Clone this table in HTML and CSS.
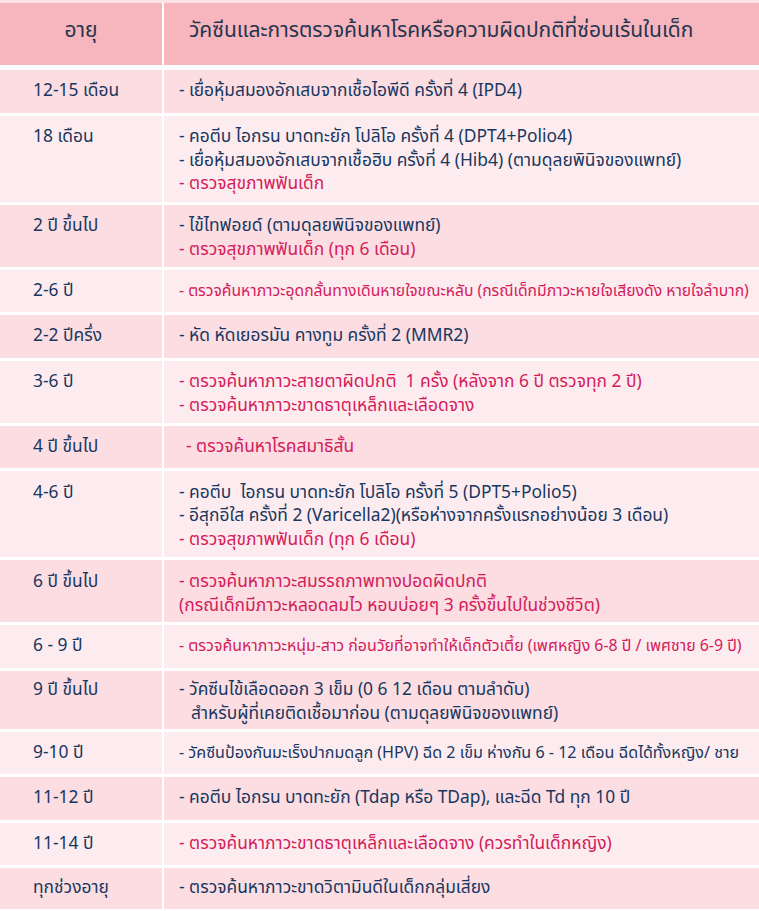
FILE: index.html
```html
<!DOCTYPE html>
<html lang="th">
<head>
<meta charset="utf-8">
<title>วัคซีนและการตรวจค้นหาโรค</title>
<link rel="stylesheet" href="styles.css">
</head>
<body>
<div class="table">
  <div class="row head">
    <div class="cell age">อายุ</div>
    <div class="cell info">วัคซีนและการตรวจค้นหาโรคหรือความผิดปกติที่ซ่อนเร้นในเด็ก</div>
  </div>
  <div class="row dark one">
    <div class="cell age">12-15 เดือน</div>
    <div class="cell info"><p>- เยื่อหุ้มสมองอักเสบจากเชื้อไอพีดี ครั้งที่ 4 (IPD4)</p></div>
  </div>
  <div class="row light three">
    <div class="cell age">18 เดือน</div>
    <div class="cell info">
      <p>- คอตีบ ไอกรน บาดทะยัก โปลิโอ ครั้งที่ 4 (DPT4+Polio4)</p>
      <p>- เยื่อหุ้มสมองอักเสบจากเชื้อฮิบ ครั้งที่ 4 (Hib4) (ตามดุลยพินิจของแพทย์)</p>
      <p class="red">- ตรวจสุขภาพฟันเด็ก</p>
    </div>
  </div>
  <div class="row dark two">
    <div class="cell age">2 ปี ขึ้นไป</div>
    <div class="cell info">
      <p>- ไข้ไทฟอยด์ (ตามดุลยพินิจของแพทย์)</p>
      <p class="red">- ตรวจสุขภาพฟันเด็ก (ทุก 6 เดือน)</p>
    </div>
  </div>
  <div class="row light one">
    <div class="cell age">2-6 ปี</div>
    <div class="cell info"><p class="red fit-a">- ตรวจค้นหาภาวะอุดกลั้นทางเดินหายใจขณะหลับ (กรณีเด็กมีภาวะหายใจเสียงดัง หายใจลำบาก)</p></div>
  </div>
  <div class="row dark one">
    <div class="cell age">2-2 ปีครึ่ง</div>
    <div class="cell info"><p>- หัด หัดเยอรมัน คางทูม ครั้งที่ 2 (MMR2)</p></div>
  </div>
  <div class="row light two">
    <div class="cell age">3-6 ปี</div>
    <div class="cell info">
      <p class="red">- ตรวจค้นหาภาวะสายตาผิดปกติ&nbsp; 1 ครั้ง (หลังจาก 6 ปี ตรวจทุก 2 ปี)</p>
      <p class="red">- ตรวจค้นหาภาวะขาดธาตุเหล็กและเลือดจาง</p>
    </div>
  </div>
  <div class="row dark one">
    <div class="cell age">4 ปี ขึ้นไป</div>
    <div class="cell info"><p class="red shift">- ตรวจค้นหาโรคสมาธิสั้น</p></div>
  </div>
  <div class="row light three">
    <div class="cell age">4-6 ปี</div>
    <div class="cell info">
      <p>- คอตีบ&nbsp; ไอกรน บาดทะยัก โปลิโอ ครั้งที่ 5 (DPT5+Polio5)</p>
      <p>- อีสุกอีใส ครั้งที่ 2 (Varicella2)(หรือห่างจากครั้งแรกอย่างน้อย 3 เดือน)</p>
      <p class="red">- ตรวจสุขภาพฟันเด็ก (ทุก 6 เดือน)</p>
    </div>
  </div>
  <div class="row dark two">
    <div class="cell age">6 ปี ขึ้นไป</div>
    <div class="cell info">
      <p class="red">- ตรวจค้นหาภาวะสมรรถภาพทางปอดผิดปกติ</p>
      <p class="red">(กรณีเด็กมีภาวะหลอดลมไว หอบบ่อยๆ 3 ครั้งขึ้นไปในช่วงชีวิต)</p>
    </div>
  </div>
  <div class="row light one">
    <div class="cell age">6 - 9 ปี</div>
    <div class="cell info"><p class="red fit-b">- ตรวจค้นหาภาวะหนุ่ม-สาว ก่อนวัยที่อาจทำให้เด็กตัวเตี้ย (เพศหญิง 6-8 ปี / เพศชาย 6-9 ปี)</p></div>
  </div>
  <div class="row dark tight">
    <div class="cell age">9 ปี ขึ้นไป</div>
    <div class="cell info">
      <p>- วัคซีนไข้เลือดออก 3 เข็ม (0 6 12 เดือน ตามลำดับ)</p>
      <p class="indent">สำหรับผู้ที่เคยติดเชื้อมาก่อน (ตามดุลยพินิจของแพทย์)</p>
    </div>
  </div>
  <div class="row light one">
    <div class="cell age">9-10 ปี</div>
    <div class="cell info"><p class="fit-c">- วัคซีนป้องกันมะเร็งปากมดลูก (HPV) ฉีด 2 เข็ม ห่างกัน 6 - 12 เดือน ฉีดได้ทั้งหญิง/ ชาย</p></div>
  </div>
  <div class="row dark one">
    <div class="cell age">11-12 ปี</div>
    <div class="cell info"><p>- คอตีบ ไอกรน บาดทะยัก (Tdap หรือ TDap), และฉีด Td ทุก 10 ปี</p></div>
  </div>
  <div class="row light one">
    <div class="cell age">11-14 ปี</div>
    <div class="cell info"><p class="red">- ตรวจค้นหาภาวะขาดธาตุเหล็กและเลือดจาง (ควรทำในเด็กหญิง)</p></div>
  </div>
  <div class="row dark one last">
    <div class="cell age">ทุกช่วงอายุ</div>
    <div class="cell info"><p>- ตรวจค้นหาภาวะขาดวิตามินดีในเด็กกลุ่มเสี่ยง</p></div>
  </div>
</div>
</body>
</html>
```
FILE: styles.css
```css
html, body {
  margin: 0;
  padding: 0;
  background: #ffffff;
}
body {
  font-family: "Noto Sans Thai", "Noto Sans", "DejaVu Sans", sans-serif;
  color: #183760;
  width: 759px;
  overflow: hidden;
}
.table {
  display: flex;
  flex-direction: column;
  gap: 3px;
}
.row {
  display: grid;
  grid-template-columns: 162px 1fr;
  column-gap: 2px;
}
.cell {
  font-size: 17.4px;
  line-height: 22.5px;
  box-sizing: border-box;
  padding-top: 10px;
}
.one .cell { height: 42.5px; padding-top: 10px; }
.two .cell { height: 62px; padding-top: 9.5px; line-height: 24px; }
.tight .cell { height: 58px; padding-top: 7.5px; line-height: 24px; }
.three .cell { height: 86px; padding-top: 10.5px; line-height: 23.5px; }
.last .cell { height: 41px; padding-top: 9px; }
.age {
  padding-left: 33px;
}
.info {
  padding-left: 15px;
}
.info p {
  margin: 0;
  white-space: nowrap;
}
.dark .cell { background: #fbdde2; }
.light .cell { background: #fdecef; }
.head {
  margin-bottom: 2px;
  border-top: 3px solid #fbe3e7;
}
.head .cell {
  background: #f7b5bd;
  height: 62px;
  padding-top: 13px;
  font-size: 21px;
  line-height: 30px;
  color: #24354f;
}
.head .age {
  padding-left: 0;
  text-align: center;
}
.head .info {
  padding-left: 25px;
}
.red { color: #d41b5a; }
.shift { padding-left: 7px; }
.indent { padding-left: 12px; }
.fit-a { font-size: 15.7px; }
.fit-b { font-size: 15.9px; }
.fit-c { font-size: 16.1px; }
```
